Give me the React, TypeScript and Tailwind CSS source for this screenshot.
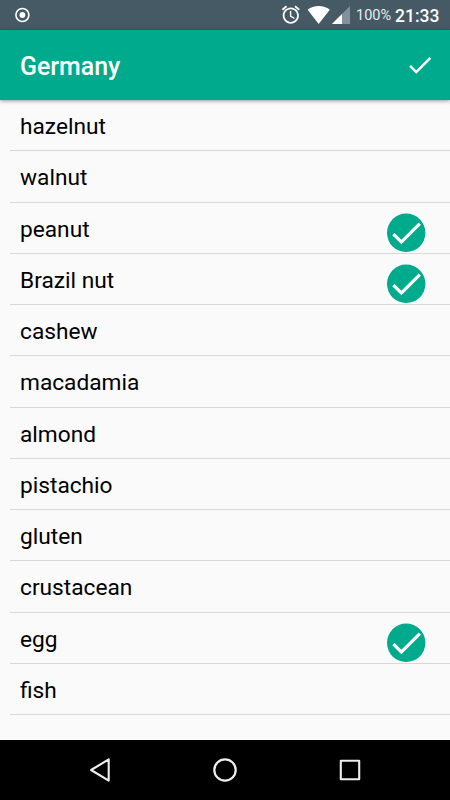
type Item = { name: string; checked?: boolean };

const items: Item[] = [
  { name: 'hazelnut' },
  { name: 'walnut' },
  { name: 'peanut', checked: true },
  { name: 'Brazil nut', checked: true },
  { name: 'cashew' },
  { name: 'macadamia' },
  { name: 'almond' },
  { name: 'pistachio' },
  { name: 'gluten' },
  { name: 'crustacean' },
  { name: 'egg', checked: true },
  { name: 'fish' },
];

const CHECK = 'M9 16.2 4.8 12l-1.4 1.4L9 19 21 7l-1.4-1.4z';

function StatusBar() {
  return (
    <div className="flex h-[30px] items-center bg-[#465a65] text-white">
      <svg className="ml-[14px] size-4" viewBox="0 0 16 16">
        <circle cx="8.4" cy="8" r="6.5" fill="none" stroke="#fff" strokeWidth="1.6" />
        <circle cx="8.4" cy="8" r="2.9" fill="#fff" />
      </svg>
      <svg className="ml-auto h-[30px] w-[76px]" viewBox="0 0 76 30">
        <path
          transform="translate(2 3.9) scale(.9)"
          fill="#fff"
          d="M22 5.72l-4.6-3.86-1.29 1.53 4.6 3.86L22 5.72zM7.88 3.39L6.6 1.86 2 5.71l1.29 1.53 4.59-3.85zM12.5 8H11v6l4.75 2.85.75-1.23-4-2.37V8zM12 4c-4.97 0-9 4.03-9 9s4.02 9 9 9c4.97 0 9-4.03 9-9s-4.03-9-9-9zm0 16c-3.87 0-7-3.13-7-7s3.13-7 7-7 7 3.13 7 7-3.13 7-7 7z"
        />
        <path fill="#fff" d="M40.7 24 29.6 9.7Q34.4 6 40.7 6T51.8 9.7z" />
        <path fill="#83919a" d="M72 6v18H54z" />
        <path fill="#fff" d="M64 14v10H54z" />
      </svg>
      <span className="ml-[2px] w-[39px] pt-[2px] text-[14.5px] leading-[30px] whitespace-nowrap text-[#e9ecee]">100%</span>
      <span className="mr-[11px] w-[44px] pt-px text-[17.5px] leading-[30px] font-medium">21:33</span>
    </div>
  );
}

function Toolbar() {
  return (
    <header className="relative z-10 flex h-[70px] items-center justify-between bg-[#00aa8d] pr-[15px] pl-5 shadow-[0_1px_4px_rgba(0,0,0,0.4)]">
      <h1 className="pt-[3px] text-[24.9px] leading-[30px] font-medium text-white">Germany</h1>
      <svg className="size-[30px]" viewBox="0 0 24 24">
        <path fill="#fff" d={CHECK} />
      </svg>
    </header>
  );
}

function Row({ name, checked }: Item) {
  return (
    <li className="ml-[10px] flex h-[51.25px] items-start justify-between border-b border-[#d8d8d8] pr-[24px] pl-[10px]">
      <span className="pt-[13px] text-[22.7px] leading-[27px] text-black">{name}</span>
      {checked && (
        <svg className="mt-[10px] size-10" viewBox="0 0 40 40">
          <circle cx="20.2" cy="19.8" r="19.2" fill="#00aa8d" />
          <path transform="translate(.7 .4) scale(1.63)" fill="#fff" d={CHECK} />
        </svg>
      )}
    </li>
  );
}

function NavBar() {
  return (
    <nav className="flex h-[60px] items-center justify-between bg-black px-[85px]">
      <svg className="size-[30px]" viewBox="0 0 30 30" fill="none" stroke="#eee" strokeWidth="2.1" strokeLinejoin="round">
        <path d="M23.7 4.4v21.2L6.1 15z" />
      </svg>
      <svg className="size-[30px]" viewBox="0 0 30 30" fill="none" stroke="#eee" strokeWidth="2.2">
        <circle cx="15" cy="15" r="10.7" />
      </svg>
      <svg className="size-[30px]" viewBox="0 0 30 30" fill="none" stroke="#eee" strokeWidth="2.1" strokeLinejoin="round">
        <rect x="5.8" y="5.8" width="18.4" height="18.4" />
      </svg>
    </nav>
  );
}

export default function App() {
  return (
    <div className="flex h-[800px] w-[450px] flex-col overflow-hidden bg-[#fafafa] font-[Roboto,sans-serif]">
      <StatusBar />
      <Toolbar />
      <ul className="flex-1">
        {items.map((item) => (
          <Row key={item.name} {...item} />
        ))}
      </ul>
      <NavBar />
    </div>
  );
}
